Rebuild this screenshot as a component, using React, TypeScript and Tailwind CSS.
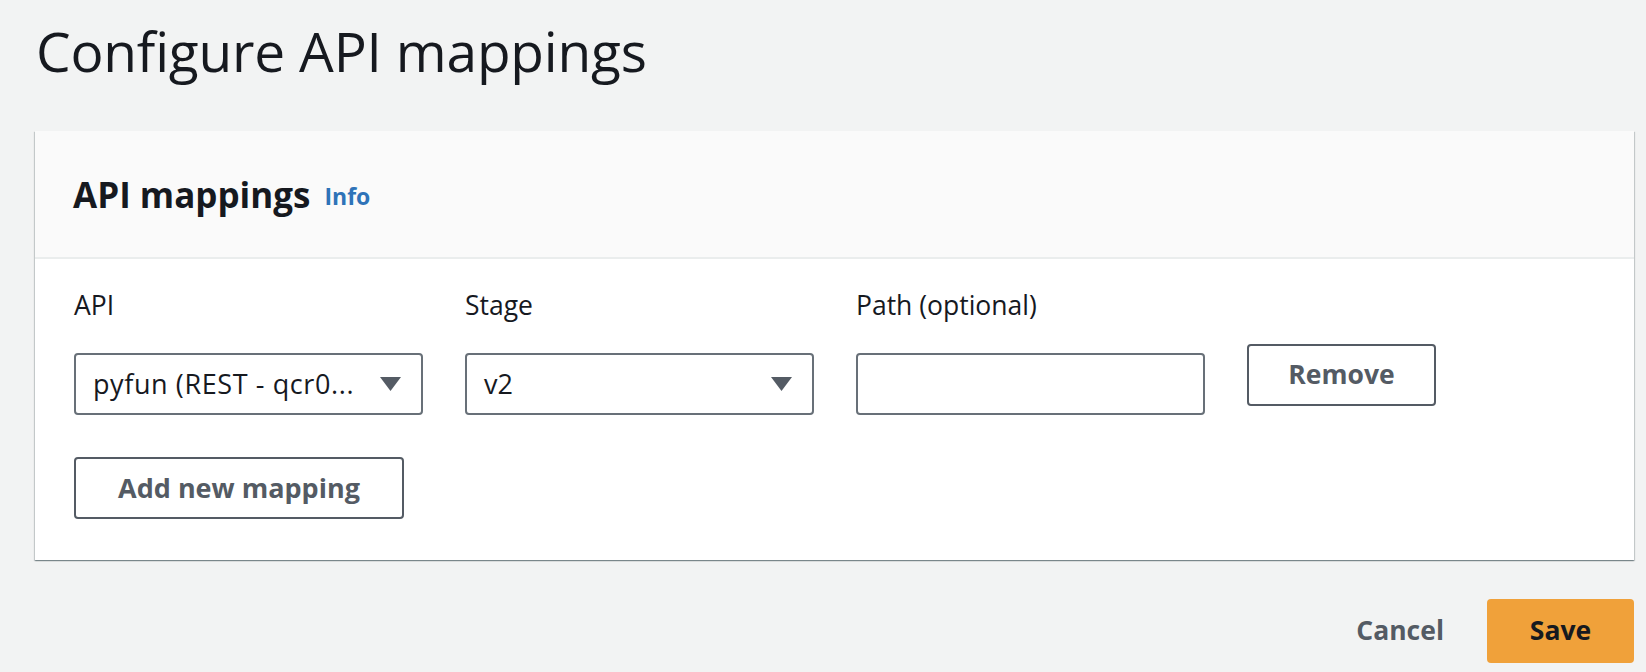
import React from "react";

function Caret() {
  return (
    <svg width="21" height="14" viewBox="0 0 21 14" className="shrink-0">
      <path d="M0 0 H21 L10.5 14 Z" fill="#545b64" />
    </svg>
  );
}

export default function App() {
  const font = { fontFamily: '"Open Sans", "Liberation Sans", sans-serif' };
  return (
    <div
      className="w-full min-h-screen bg-[#f2f3f3] text-[#16191f] pl-[35px] pr-[12px] pt-[11px]"
      style={font}
    >
      <h1 className="text-[55px] leading-[80px] font-medium h-[120px] pl-[1px] tracking-[-0.2px]">
        Configure API mappings
      </h1>

      <div className="bg-white shadow-[0_1px_1px_0_rgba(0,28,36,0.3),1px_1px_1px_0_rgba(0,28,36,0.15),-1px_1px_1px_0_rgba(0,28,36,0.15)]">
        <div className="h-[128px] bg-[#fafafa] border-b-2 border-[#eaeded] flex items-center pl-[38px]">
          <h2 className="text-[35px] font-bold leading-none">API mappings</h2>
          <span className="ml-[14px] mt-[4px] text-[23px] font-bold text-[#2e73b8]">Info</span>
        </div>

        <div className="pl-[39px] pt-[26px] pb-[41px]">
          <div className="flex items-end gap-[42px]">
            <div className="w-[349px]">
              <div className="text-[26.5px] leading-[40px] mb-[28px]">API</div>
              <div className="h-[62px] border-2 border-[#687078] rounded-[4px] flex items-center pl-[17px] pr-[20px] justify-between">
                <span className="text-[27px] tracking-[0.6px]">pyfun (REST - qcr0...</span>
                <Caret />
              </div>
            </div>
            <div className="w-[349px]">
              <div className="text-[26.5px] leading-[40px] mb-[28px]">Stage</div>
              <div className="h-[62px] border-2 border-[#687078] rounded-[4px] flex items-center pl-[17px] pr-[20px] justify-between">
                <span className="text-[27px]">v2</span>
                <Caret />
              </div>
            </div>
            <div className="w-[349px]">
              <div className="text-[26.5px] leading-[40px] mb-[28px]">Path (optional)</div>
              <div className="h-[62px] border-2 border-[#687078] rounded-[4px]" />
            </div>
            <button className="mb-[9px] w-[189px] h-[62px] border-2 border-[#545b64] rounded-[4px] text-[26.5px] font-bold text-[#545b64] bg-white">
              Remove
            </button>
          </div>

          <button className="mt-[42px] w-[330px] h-[62px] border-2 border-[#545b64] rounded-[4px] text-[27px] font-bold text-[#545b64] bg-white">
            Add new mapping
          </button>
        </div>
      </div>

      <div className="flex justify-end items-center mt-[39px] gap-[43px]">
        <span className="text-[26.5px] font-bold text-[#545b64]">Cancel</span>
        <button className="w-[147px] h-[64px] rounded-[4px] bg-[#f0a13a] text-[26.5px] font-bold text-[#16191f]">
          Save
        </button>
      </div>
    </div>
  );
}
